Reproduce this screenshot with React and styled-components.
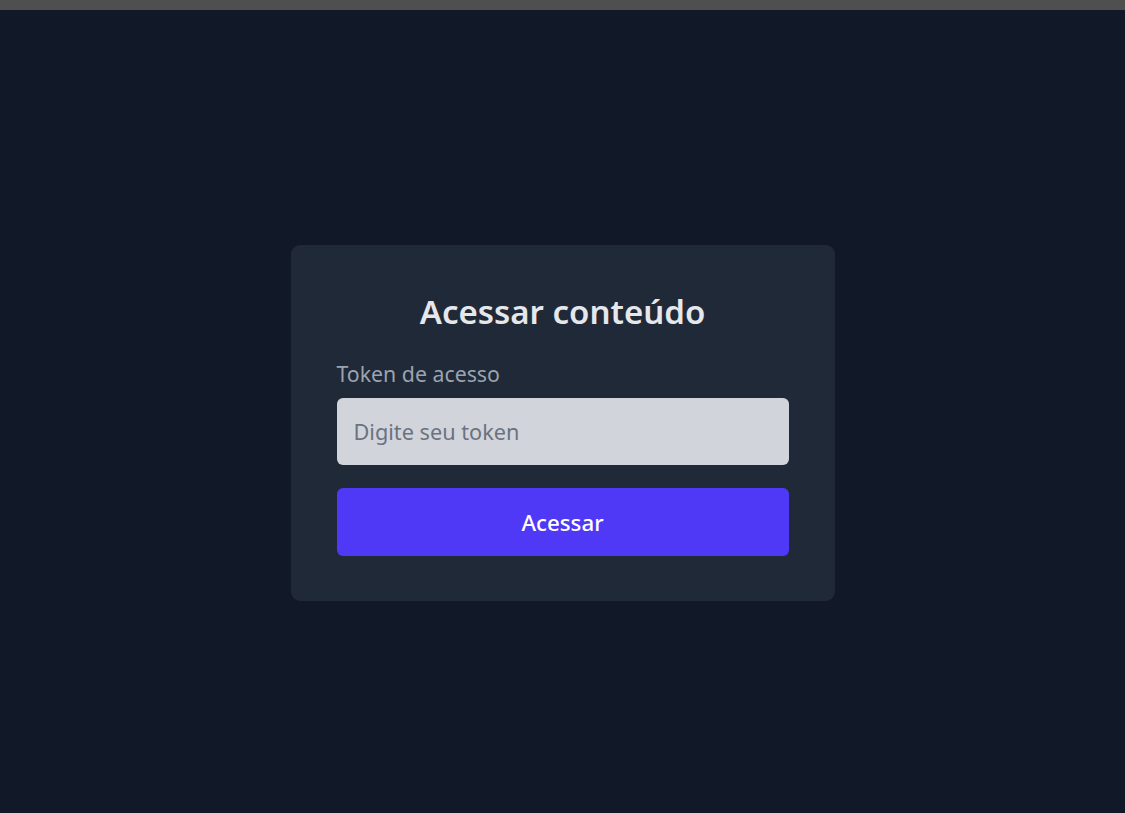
import React from "react";
import styled, { createGlobalStyle } from "styled-components";

const Global = createGlobalStyle`
  html, body { margin: 0; padding: 0; background: #111827; }
  body { font-family: "Noto Sans", "Open Sans", sans-serif; }
  * { box-sizing: border-box; }
`;

const TopBar = styled.div`
  height: 10px;
  background: #4f4f4f;
`;

const Page = styled.main`
  min-height: 803px;
  display: flex;
  justify-content: center;
  align-items: flex-start;
  padding-top: 235px;
  background: #111827;
`;

const Card = styled.form`
  width: 544px;
  background: #1f2937;
  border-radius: 9px;
  padding: 46px 46px 45px;
  display: flex;
  flex-direction: column;
`;

const Title = styled.h1`
  margin: 0;
  text-align: center;
  color: #e5e7eb;
  font-size: 33px;
  font-weight: 600;
  line-height: 42px;
`;

const Label = styled.label`
  margin-top: 26px;
  color: #9ca3af;
  font-size: 21.3px;
  line-height: 30px;
`;

const Input = styled.input`
  margin-top: 9px;
  height: 67px;
  border: none;
  outline: none;
  border-radius: 6px;
  background: #d1d5db;
  padding: 0 17px;
  font-family: inherit;
  font-size: 21.7px;
  color: #111827;
  &::placeholder { color: #6b7280; }
`;

const Button = styled.button`
  margin-top: 23px;
  height: 68px;
  border: none;
  border-radius: 6px;
  background: #4f39f6;
  color: #ffffff;
  font-family: inherit;
  font-size: 22.3px;
  font-weight: 500;
  cursor: pointer;
`;

export default function App() {
  return (
    <>
      <Global />
      <TopBar />
      <Page>
        <Card onSubmit={(e) => e.preventDefault()}>
          <Title>Acessar conteúdo</Title>
          <Label htmlFor="token">Token de acesso</Label>
          <Input id="token" placeholder="Digite seu token" />
          <Button type="submit">Acessar</Button>
        </Card>
      </Page>
    </>
  );
}
